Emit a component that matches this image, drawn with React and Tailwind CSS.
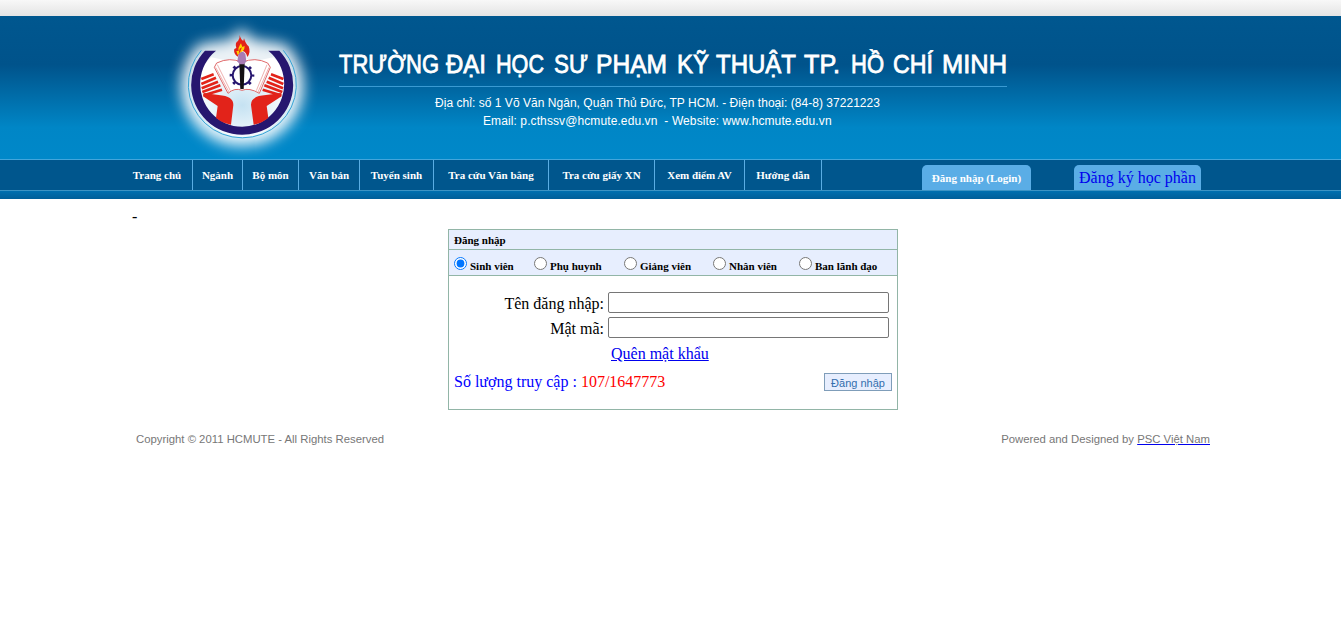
const navItems = [
  ['Trang chủ', 'w-[71px]'],
  ['Ngành', 'w-[50px]'],
  ['Bộ môn', 'w-[56px]'],
  ['Văn bản', 'w-[61px]'],
  ['Tuyển sinh', 'w-[74px]'],
  ['Tra cứu Văn bằng', 'w-[115px]'],
  ['Tra cứu giấy XN', 'w-[106px]'],
  ['Xem điểm AV', 'w-[90px]'],
  ['Hướng dẫn', 'w-[77px]'],
];

const roles = [
  ['Sinh viên', 'w-[80px]'],
  ['Phụ huynh', 'w-[90px]'],
  ['Giảng viên', 'w-[89px]'],
  ['Nhân viên', 'w-[86px]'],
  ['Ban lãnh đạo', 'w-[90px]'],
];

// [word, start x, unscaled length, horizontal scale]
const titleWords = [
  ['TRƯỜNG', 1, 117, 0.855],
  ['ĐẠI', 108, 40, 1],
  ['HỌC', 158, 48, 1],
  ['SƯ', 216, 34, 1],
  ['PHẠM', 258, 71, 1],
  ['KỸ', 339, 32, 1],
  ['THUẬT', 378, 80, 1],
  ['TP.', 466, 36, 1],
  ['HỒ', 513, 33, 1],
  ['CHÍ', 555, 40, 1],
  ['MINH', 604, 65, 1],
];

function Logo() {
  return (
    <svg className="block h-[143px] w-[178px] shrink-0" viewBox="0 48 534 429" aria-hidden="true">
      <defs>
        <filter id="halo" x="-30%" y="-30%" width="160%" height="160%">
          <feGaussianBlur stdDeviation="21" />
        </filter>
        <radialGradient id="core" cx="50%" cy="60%" r="50%">
          <stop offset="0" stopColor="#c5e2f2" />
          <stop offset="1" stopColor="#fff" />
        </radialGradient>
      </defs>
      <g filter="url(#halo)" opacity=".92">
        <path
          d="M128 152 A162 158 0 1 0 366 152 L262 136 L246 112 L230 136 Z"
          fill="#fff"
          stroke="#fff"
          strokeWidth="42"
          strokeLinejoin="round"
        />
      </g>
      <path d="M154 172 L204 182 Q246 170 290 182 L340 172 A140 137 0 1 1 154 172 Z" fill="url(#core)" />
      <path d="M124 151 A162 159 0 1 0 370 151" fill="none" stroke="#36a4d6" strokeWidth="3" />
      <path d="M135 152 L168 152 A126 128 0 1 0 325 152 L358 152 A153 149.6 0 1 1 135 152 Z" fill="#26166f" />
      <g fill="#e2231a">
        <path d="M131 279 L176 285 Q221 288 220 315 L213 374 Q190 371 168 354 L173 318 L129 289 Z" />
        <path d="M364 279 L318 285 Q272 288 273 315 L281 374 Q303 371 325 354 L320 318 L365 289 Z" />
      </g>
      <g stroke="#e2231a" strokeWidth="8">
        <path d="M124 237 L161 223 M124 252 L168 233 M125 265 L174 245 M127 276 L181 256 M131 286 L186 269" />
        <path d="M370 237 L333 223 M370 252 L326 233 M369 265 L320 245 M367 276 L313 256 M363 286 L308 269" />
      </g>
      <path d="M163 202 L170 189 Q210 170 246 187 Q285 170 323 189 L331 202 L298 280 Q268 262 246 271 Q224 262 204 280 Z" fill="#fff" stroke="#e0696a" strokeWidth="3" />
      <path d="M167 202 L207 276 M172 194 L211 272 M327 202 L294 276 M321 194 L289 272" fill="none" stroke="#e58a88" strokeWidth="2" />
      <circle cx="246" cy="226" r="28" fill="none" stroke="#26166f" strokeWidth="6" />
      <circle cx="246" cy="226" r="33" fill="none" stroke="#26166f" strokeWidth="8" strokeDasharray="8 17.92" strokeDashoffset="4" />
      <path d="M238 190 H254 L251 267 H241 Z" fill="#141014" />
      <path d="M236 160 Q247 149 256 162 L259 184 L253 193 H239 L232 184 Z" fill="#a87ab4" />
      <path d="M239 105 Q243 121 250 122 L252 115 Q257 132 266 139 Q273 158 262 171 Q258 154 247 153 Q237 156 233 170 Q219 160 223 147 L229 144 Q224 128 234 123 Q240 116 239 105Z" fill="#e2231a" />
      <path d="M243 130 L247 141 L254 138 Q254 147 249 153 L239 158 L233 165 L229 153 L236 153 Q233 144 243 130Z" fill="#ffd400" />
      <path d="M246 142 L240 157 L236 159 L239 146Z" fill="#e2231a" />
    </svg>
  );
}

function Title() {
  return (
    <svg
      className="block h-[44px] w-[672px] fill-white font-['Liberation_Sans',sans-serif] text-[26px]"
      role="heading"
      aria-level="1"
      stroke="#fff"
      strokeWidth=".8"
    >
      {titleWords.map(([word, x, length, scale]) => (
        <text
          key={word}
          transform={`translate(${x} 31) scale(${scale} 1)`}
          textLength={length}
          lengthAdjust="spacingAndGlyphs"
        >
          {word}
        </text>
      ))}
    </svg>
  );
}

function Banner() {
  return (
    <header className="flex h-[143px] bg-[linear-gradient(#00578f_0%,#00538b_34%,#0086c6_78%,#0088c9_100%)] pl-[160px]">
      <Logo />
      <div className="w-[672px] pt-[26px]">
        <Title />
        <div className="ml-px h-px w-[668px] bg-[#3a9ad2]" />
        <div className="pt-[7px] font-['Liberation_Sans',sans-serif] text-[12px] leading-[18px] whitespace-pre text-white">
          <p className="pl-[97px] tracking-[0.035px]">
            Địa chỉ: số 1 Võ Văn Ngân, Quận Thủ Đức, TP HCM. - Điện thoại: (84-8) 37221223
          </p>
          <p className="pl-[145px] tracking-[0.1px]">{'Email: p.cthssv@hcmute.edu.vn  - Website: www.hcmute.edu.vn'}</p>
        </div>
      </div>
    </header>
  );
}

function Nav() {
  return (
    <nav className="flex h-8 border-y border-t-[#43a6dc] border-b-[#3c94c4] bg-[#00568d] pl-[122px] text-[11px] font-bold text-white">
      {navItems.map(([label, width]) => (
        <a key={label} className={`${width} shrink-0 border-r border-[#5aade4] text-center leading-[30px] whitespace-nowrap`}>
          {label}
        </a>
      ))}
      <a className="mt-[5px] ml-[100px] h-[25px] w-[109px] rounded-t-[5px] bg-[#5aade6] text-center leading-[26px]">
        Đăng nhập (Login)
      </a>
      <a className="mt-[5px] ml-[43px] h-[25px] w-[127px] rounded-t-[5px] bg-[#5aade6] text-center text-[16px] leading-[25px] font-normal whitespace-nowrap text-[#0000ee]">
        Đăng ký học phần
      </a>
    </nav>
  );
}

function Field({ label, type }) {
  return (
    <label className="flex h-[25px] text-[16px] leading-[23px]">
      <span className="w-[155px] text-right">{label}</span>
      <input type={type} className="ml-[4px] h-[21px] w-[281px] rounded-[2px] border border-[#767676] bg-white px-1 text-[13px]" />
    </label>
  );
}

function LoginPanel() {
  return (
    <form className="ml-[448px] h-[181px] w-[450px] border border-[#92b5a7] bg-white">
      <h2 className="h-5 border-b border-[#92b5a7] bg-[#e7eefe] pl-[5px] text-[11px] leading-[21px] font-bold">Đăng nhập</h2>
      <div className="flex h-[26px] border-b border-[#92b5a7] bg-[#e7eefe] pl-[5px] text-[11px] font-bold">
        {roles.map(([label, width], i) => (
          <label key={label} className={`${width} flex shrink-0 whitespace-nowrap`}>
            <input type="radio" name="role" defaultChecked={i === 0} className="mt-[7px] mr-[3px] h-[13px] w-[13px] shrink-0" />
            <span className="pt-[10px] leading-[13px]">{label}</span>
          </label>
        ))}
      </div>
      <div className="pt-4">
        <Field label="Tên đăng nhập:" type="text" />
        <Field label="Mật mã:" type="password" />
        <a className="ml-[162px] block leading-[24px] text-[#0000ee] underline">Quên mật khẩu</a>
      </div>
      <div className="flex justify-between pt-[7px] pr-[5px] pl-[5px]">
        <p className="leading-[18px] text-[#0000ff]">
          Số lượng truy cập : <span className="text-[#ff0000]">107/1647773</span>
        </p>
        <button
          type="button"
          className="h-[18px] w-[68px] border border-[#7f9db9] bg-[#e7eefe] font-['Liberation_Sans',sans-serif] text-[11px] leading-[18px] text-[#336fad]"
        >
          Đăng nhập
        </button>
      </div>
    </form>
  );
}

export default function App() {
  return (
    <div className="min-h-[622px] bg-white font-['Liberation_Serif',serif] text-[16px] text-black">
      <div className="h-4 bg-linear-to-b from-[#f8f8f8] to-[#e4e4e4]" />
      <Banner />
      <Nav />
      <div className="h-2 bg-linear-to-b from-[#0070b0] to-[#005f99]" />
      <main>
        <p className="h-[30px] pl-[132px] leading-[35px]">-</p>
        <LoginPanel />
      </main>
      <footer className="mr-[131px] ml-[136px] flex justify-between pt-[20px] font-['Liberation_Sans',sans-serif] text-[11.33px] leading-[18px] text-[#777777]">
        <p>Copyright © 2011 HCMUTE - All Rights Reserved</p>
        <p>
          Powered and Designed by <a className="underline decoration-[#0000ee]">PSC Việt Nam</a>
        </p>
      </footer>
    </div>
  );
}
